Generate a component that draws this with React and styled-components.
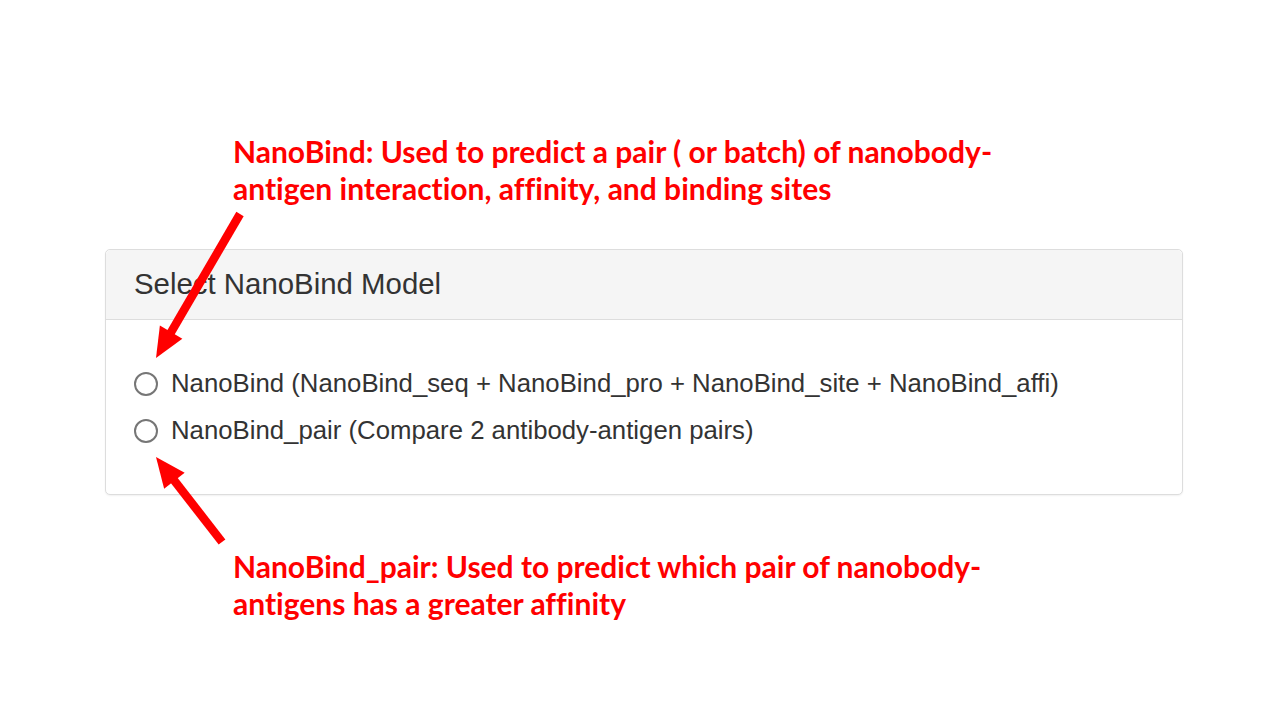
import React from 'react';
import styled, { createGlobalStyle } from 'styled-components';

const GlobalStyle = createGlobalStyle`
  html, body {
    margin: 0;
    padding: 0;
    background: #ffffff;
  }
  body {
    font-family: "Liberation Sans", Arial, sans-serif;
  }
`;

const Page = styled.div`
  position: relative;
  width: 1280px;
  height: 720px;
  padding-top: 133px;
  box-sizing: border-box;
  overflow: hidden;
`;

const Note = styled.p`
  margin: 0;
  margin-left: 233px;
  margin-top: ${p => p.$top || 0}px;
  color: #ff0000;
  font-family: Lato, "Open Sans", sans-serif;
  font-weight: 700;
  font-size: 30px;
  line-height: 37px;
  font-variant-ligatures: none;
  white-space: nowrap;
`;

const Panel = styled.section`
  margin: 42px 0 0 105px;
  width: 1078px;
  box-sizing: border-box;
  border: 1px solid #dddddd;
  border-radius: 5px;
  background: #ffffff;
  box-shadow: 0 1px 2px rgba(0, 0, 0, 0.06);
`;

const PanelHeading = styled.div`
  display: flex;
  align-items: center;
  height: 70px;
  padding: 0 0 2px 28px;
  box-sizing: border-box;
  background: #f5f5f5;
  border-bottom: 1px solid #dddddd;
  border-radius: 5px 5px 0 0;
`;

const PanelTitle = styled.h3`
  margin: 0;
  font-size: 29.4px;
  font-weight: 400;
  color: #333333;
`;

const PanelBody = styled.div`
  padding: 40px 28px 40px;
`;

const Option = styled.label`
  display: flex;
  align-items: center;
  height: 47px;
  font-size: 25.75px;
  color: #333333;
  cursor: pointer;
`;

const Radio = styled.input.attrs({ type: 'radio' })`
  appearance: none;
  margin: 0 13px 0 0;
  width: 24px;
  height: 24px;
  border: 2px solid #767676;
  border-radius: 50%;
  background: #ffffff;
  box-sizing: border-box;
  flex-shrink: 0;
`;

const Arrows = styled.svg`
  position: absolute;
  left: 0;
  top: 0;
  pointer-events: none;
`;

function Arrow({ from, to }) {
  const [x1, y1] = from;
  const [x2, y2] = to;
  const dx = x2 - x1;
  const dy = y2 - y1;
  const len = Math.hypot(dx, dy);
  const ux = dx / len;
  const uy = dy / len;
  const head = 30;
  const half = 13;
  const bx = x2 - ux * head;
  const by = y2 - uy * head;
  const px = -uy;
  const py = ux;
  return (
    <g fill="#ff0000" stroke="none">
      <line x1={x1} y1={y1} x2={bx + ux * 2} y2={by + uy * 2} stroke="#ff0000" strokeWidth="8.5" />
      <polygon
        points={`${x2},${y2} ${bx + px * half},${by + py * half} ${bx - px * half},${by - py * half}`}
      />
    </g>
  );
}

export default function App() {
  return (
    <Page>
      <GlobalStyle />
      <Note>
        NanoBind: Used to predict a pair ( or batch) of nanobody-
        <br />
        antigen interaction, affinity, and binding sites
      </Note>
      <Panel>
        <PanelHeading>
          <PanelTitle>Select NanoBind Model</PanelTitle>
        </PanelHeading>
        <PanelBody>
          <Option>
            <Radio name="model" value="nanobind" />
            NanoBind (NanoBind_seq + NanoBind_pro + NanoBind_site + NanoBind_affi)
          </Option>
          <Option>
            <Radio name="model" value="nanobind_pair" />
            NanoBind_pair (Compare 2 antibody-antigen pairs)
          </Option>
        </PanelBody>
      </Panel>
      <Note $top={53}>
        NanoBind_pair: Used to predict which pair of nanobody-
        <br />
        antigens has a greater affinity
      </Note>
      <Arrows width="1280" height="720" viewBox="0 0 1280 720">
        <Arrow from={[240, 214]} to={[156, 358]} />
        <Arrow from={[222, 542]} to={[156, 457]} />
      </Arrows>
    </Page>
  );
}
